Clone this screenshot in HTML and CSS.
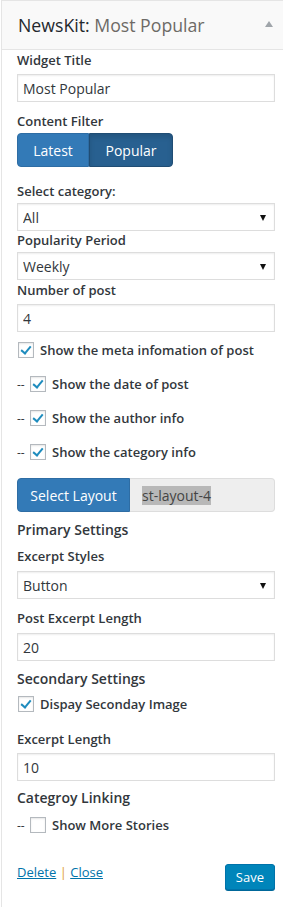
FILE: index.html
```html
<!DOCTYPE html>
<html lang="en">
<head>
    <meta charset="UTF-8">
    <meta name="viewport" content="width=device-width, initial-scale=1.0">
    <title>NewsKit: Most Popular</title>
    <link rel="stylesheet" href="styles.css">
</head>
<body>
    <div class="widget">
        <div class="widget-top">
            <h3>NewsKit: <span class="in-title">Most Popular</span></h3>
            <span class="toggle"></span>
        </div>
        <div class="widget-inside">
            <label class="lbl">Widget Title</label>
            <input class="text-input" type="text" value="Most Popular">

            <label class="lbl gap-10">Content Filter</label>
            <div class="btn-group">
                <button class="btn">Latest</button>
                <button class="btn active">Popular</button>
            </div>

            <label class="lbl gap-15">Select category:</label>
            <div class="select-wrap"><select><option>All</option></select></div>

            <label class="lbl">Popularity Period</label>
            <div class="select-wrap"><select><option>Weekly</option></select></div>

            <label class="lbl gap-1">Number of post</label>
            <input class="text-input" type="text" value="4">

            <div class="check-row first"><span class="cb checked"></span>Show the meta infomation of post</div>
            <div class="check-row"><span class="dash">--</span><span class="cb checked"></span>Show the date of post</div>
            <div class="check-row"><span class="dash">--</span><span class="cb checked"></span>Show the author info</div>
            <div class="check-row"><span class="dash">--</span><span class="cb checked"></span>Show the category info</div>

            <div class="layout-picker">
                <button class="btn">Select Layout</button>
                <div class="layout-value"><span class="sel">st-layout-4</span></div>
            </div>

            <h4 class="section">Primary Settings</h4>
            <label class="lbl gap-7">Excerpt Styles</label>
            <div class="select-wrap gap-6"><select><option>Button</option></select></div>

            <label class="lbl gap-10">Post Excerpt Length</label>
            <input class="text-input gap-6" type="text" value="20">

            <h4 class="section">Secondary Settings</h4>
            <div class="check-row tight"><span class="cb checked"></span>Dispay Seconday Image</div>

            <label class="lbl gap-17">Excerpt Length</label>
            <input class="text-input" type="text" value="10">

            <h4 class="section gap-7">Categroy Linking</h4>
            <div class="check-row tight2"><span class="dash">--</span><span class="cb"></span>Show More Stories</div>

            <div class="widget-actions">
                <div class="links"><a href="#">Delete</a> <span class="sep">|</span> <a href="#">Close</a></div>
                <button class="save-btn">Save</button>
            </div>
        </div>
    </div>
</body>
</html>
```

FILE: styles.css
```css
body {
    margin: 0;
    padding: 0;
    background-color: #fff;
    font-family: "Open Sans", "Liberation Sans", sans-serif;
    color: #23282d;
    overflow: hidden;
}

.widget {
    margin-left: 1px;
    border: 1px solid #e5e5e5;
    border-right: none;
    background-color: #fff;
}

.widget-top {
    height: 48px;
    background-color: #f9f9f9;
    border-bottom: 1px solid #e5e5e5;
    display: flex;
    align-items: center;
    justify-content: space-between;
    padding: 0 10px 0 16px;
}

.widget-top h3 {
    margin: 0;
    font-size: 17.7px;
    font-weight: 400;
    color: #23282d;
}

.in-title {
    color: #6d6a66;
}

.toggle {
    width: 0;
    height: 0;
    border-left: 4px solid transparent;
    border-right: 4px solid transparent;
    border-bottom: 6px solid #a0a5aa;
    margin-bottom: 2px;
}

.widget-inside {
    padding: 1px 8px 20px 15px;
}

.lbl {
    display: block;
    font-size: 13px;
    font-weight: 600;
    line-height: 18px;
    color: #32373c;
}

.gap-1 { margin-top: 1px; }
.gap-6 { margin-top: 6px !important; }
.gap-7 { margin-top: 7px !important; }
.gap-10 { margin-top: 10px; }
.gap-15 { margin-top: 15px; }
.gap-17 { margin-top: 17px; }

.text-input {
    display: block;
    box-sizing: border-box;
    width: 100%;
    height: 28px;
    margin: 5px 0 0;
    padding: 0 5px;
    border: 1px solid #ddd;
    box-shadow: inset 0 1px 2px rgba(0, 0, 0, 0.07);
    font-family: inherit;
    font-size: 14px;
    color: #32373c;
    outline: none;
}

.btn-group {
    display: flex;
    margin-top: 3px;
}

.btn {
    height: 34px;
    padding: 0 16px;
    border: 1px solid #2e6da4;
    background-color: #337ab7;
    color: #fff;
    font-family: inherit;
    font-size: 14px;
    cursor: pointer;
}

.btn-group .btn:first-child {
    border-radius: 4px 0 0 4px;
    width: 72px;
    padding: 0;
}

.btn-group .btn.active {
    width: 84px;
    padding: 0;
    background-color: #286090;
    border-color: #204d74;
    border-radius: 0 4px 4px 0;
    box-shadow: inset 0 3px 5px rgba(0, 0, 0, 0.125);
}

.select-wrap {
    position: relative;
    margin-top: 3px;
}

.select-wrap select {
    display: block;
    width: 100%;
    height: 28px;
    padding: 0 5px;
    border: 1px solid #ddd;
    background-color: #fff;
    box-shadow: inset 0 1px 2px rgba(0, 0, 0, 0.07);
    font-family: inherit;
    font-size: 14px;
    color: #32373c;
    -webkit-appearance: none;
    appearance: none;
    border-radius: 0;
}

.select-wrap::after {
    content: "";
    position: absolute;
    right: 9px;
    top: 12px;
    border-left: 3.5px solid transparent;
    border-right: 3.5px solid transparent;
    border-top: 6px solid #111;
}

.check-row {
    display: flex;
    align-items: center;
    height: 18px;
    margin-top: 16px;
    font-size: 13px;
    font-weight: 600;
    color: #32373c;
}

.check-row.first {
    margin-top: 9px;
}

.check-row.tight {
    margin-top: 6px;
}

.check-row.tight2 {
    margin-top: 8px;
}

.dash {
    width: 12px;
    font-weight: 400;
    font-size: 12px;
}

.cb {
    box-sizing: border-box;
    width: 16px;
    height: 16px;
    margin: 0 6px 0 1px;
    border: 1px solid #b4b9be;
    background-color: #fff;
    box-shadow: inset 0 1px 2px rgba(0, 0, 0, 0.1);
    position: relative;
}

.cb.checked::after {
    content: "";
    position: absolute;
    left: 4px;
    top: 1px;
    width: 4px;
    height: 8px;
    border-right: 2.5px solid #1e8cbe;
    border-bottom: 2.5px solid #1e8cbe;
    transform: rotate(40deg);
}

.layout-picker {
    display: flex;
    margin-top: 17px;
    height: 34px;
}

.layout-picker .btn {
    height: 34px;
    width: 113px;
    padding: 0;
    border-radius: 4px 0 0 4px;
}

.layout-value {
    flex: 1;
    display: flex;
    align-items: center;
    padding-left: 12px;
    background-color: #eee;
    border: 1px solid #ddd;
    border-left: none;
    border-radius: 0 4px 4px 0;
    font-size: 14px;
    color: #555;
}

.sel {
    background-color: #b8b8b8;
    color: #444;
}

.section {
    margin: 8px 0 0;
    font-size: 14px;
    font-weight: 600;
    line-height: 20px;
    color: #32373c;
}

.widget-actions {
    display: flex;
    justify-content: space-between;
    align-items: center;
    margin-top: 30px;
}

.links {
    font-size: 13px;
    margin-top: -10px;
}

.links a {
    color: #0073aa;
}

.sep {
    color: #e0a030;
}

.save-btn {
    height: 26px;
    padding: 0 10px;
    border: 1px solid #0073aa;
    border-radius: 3px;
    background-color: #0085ba;
    box-shadow: 0 1px 0 #006799;
    color: #fff;
    font-family: inherit;
    font-size: 13px;
    cursor: pointer;
}
```
